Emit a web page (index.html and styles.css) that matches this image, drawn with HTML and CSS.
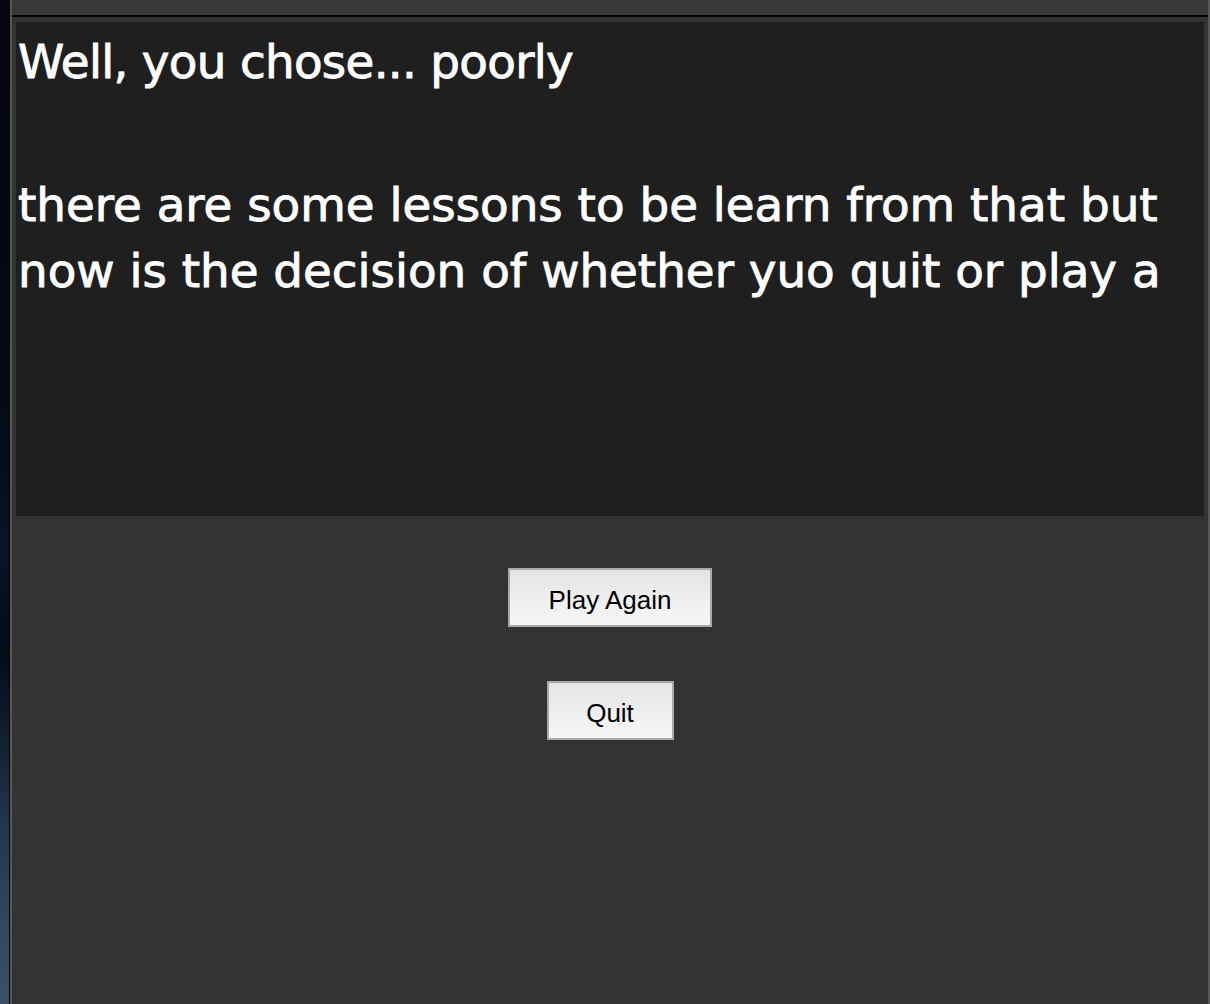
FILE: index.html
```html
<!DOCTYPE html>
<html lang="en">
<head>
<meta charset="utf-8">
<title>Choice</title>
<link rel="stylesheet" href="styles.css">
</head>
<body>
<div class="screen">
  <div class="desktop"></div>
  <div class="window">
    <div class="frame">
      <div class="titlebar"></div>
      <div class="content">
        <div class="story">
          <p class="title">Well, you chose... poorly</p>
          <p class="body">there are some lessons to be learn from that but<br>now is the decision of whether yuo quit or play a</p>
        </div>
        <div class="actions">
          <button class="btn btn-again" type="button">Play Again</button>
          <button class="btn btn-quit" type="button">Quit</button>
        </div>
      </div>
    </div>
  </div>
</div>
</body>
</html>
```

FILE: styles.css
```css
* { box-sizing: border-box; }
html, body { margin: 0; padding: 0; height: 100%; }
body { background: #333; overflow: hidden; }

.screen {
  display: flex;
  height: 1004px;
  width: 1210px;
}

.desktop {
  width: 9px;
  flex: none;
  background: linear-gradient(to bottom,
    #03060d 0%,
    #050a14 40%,
    #0a1421 55%,
    #060c16 65%,
    #0f1b29 72%,
    #22364a 82%,
    #33495a 92%,
    #3a5162 100%);
}

.window {
  flex: 1;
  border-left: 1px solid #080808;
  display: flex;
}

.frame {
  flex: 1;
  border-left: 2px solid #575757;
  border-right: 2px solid #575757;
  background: #333333;
  display: flex;
  flex-direction: column;
}

.titlebar {
  height: 17px;
  flex: none;
  background: #393939;
  border-bottom: 2px solid #050505;
}

.content {
  flex: 1;
  padding: 5px 4px 0 4px;
  display: flex;
  flex-direction: column;
}

.story {
  height: 494px;
  background: #1f1f1f;
  padding: 7px 2px 0 2px;
  color: #ffffff;
  font-family: "DejaVu Sans", "Liberation Sans", sans-serif;
  font-size: 46.8px;
  line-height: 66.5px;
  -webkit-text-stroke: 0.9px #ffffff;
  overflow: hidden;
  white-space: nowrap;
}

.story p { margin: 0; }
.title { margin-bottom: 76px !important; letter-spacing: -0.7px; }

.actions {
  display: flex;
  flex-direction: column;
  align-items: center;
  padding-top: 52px;
  gap: 54px;
}

.btn {
  font-family: "Liberation Sans", Arial, sans-serif;
  font-size: 26px;
  color: #000;
  background: linear-gradient(to bottom, #e4e4e4 0%, #f0f0f0 60%, #f6f6f6 100%);
  border: 2px solid #a9a9a9;
  border-radius: 0;
  padding: 5px 0 0 0;
  margin: 0;
  cursor: pointer;
}

.btn-again { width: 204px; height: 59px; }
.btn-quit { width: 127px; height: 59px; }
```
